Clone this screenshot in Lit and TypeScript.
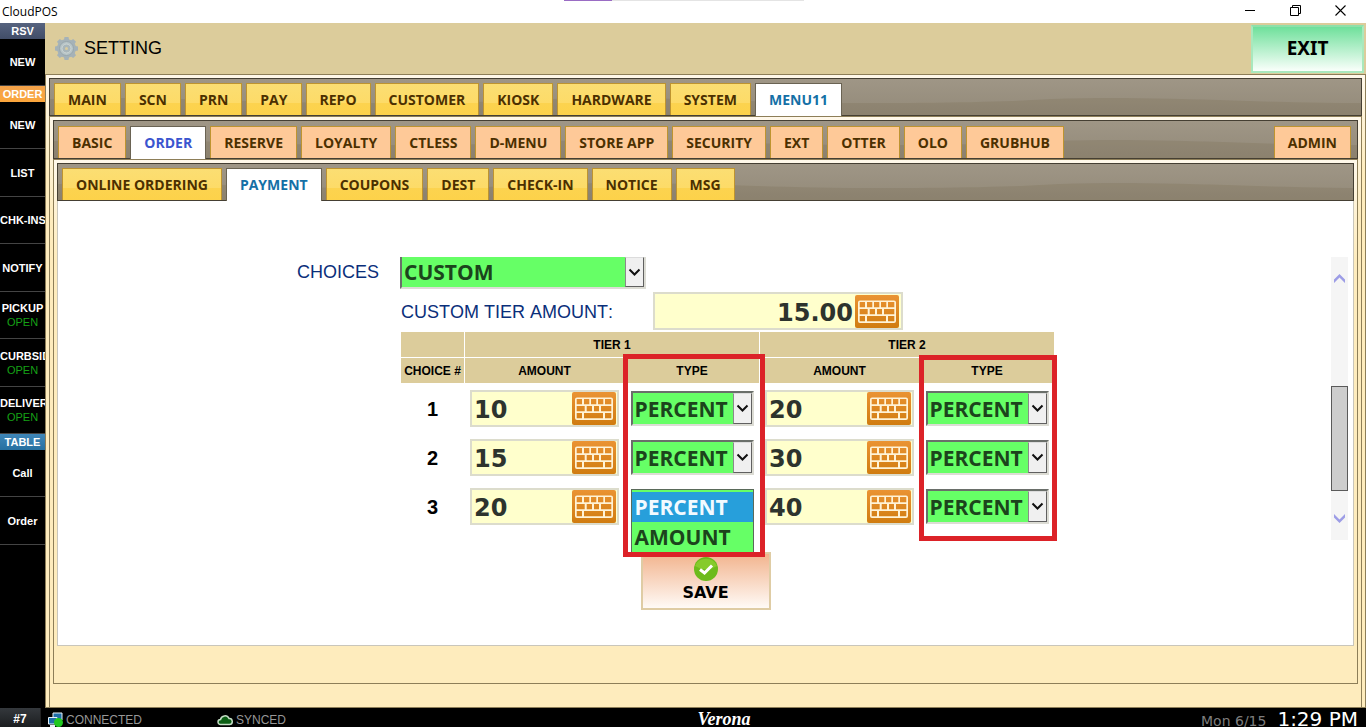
import { LitElement, html, css, svg, nothing } from "lit";
import { customElement, property } from "lit/decorators.js";
import { classMap } from "lit/directives/class-map.js";

const MAIN_TABS = ["MAIN", "SCN", "PRN", "PAY", "REPO", "CUSTOMER", "KIOSK", "HARDWARE", "SYSTEM", "MENU11"];
const MENU_TABS = [
  "BASIC", "ORDER", "RESERVE", "LOYALTY", "CTLESS", "D-MENU", "STORE APP",
  "SECURITY", "EXT", "OTTER", "OLO", "GRUBHUB",
];
const ORDER_TABS = ["ONLINE ORDERING", "PAYMENT", "COUPONS", "DEST", "CHECK-IN", "NOTICE", "MSG"];

interface NavItem { label: string; open?: boolean; }
interface NavGroup { title: string; tone: string; items: NavItem[]; }

const NAV: NavGroup[] = [
  { title: "RSV", tone: "slate", items: [{ label: "NEW" }] },
  {
    title: "ORDER", tone: "amber", items: [
      { label: "NEW" }, { label: "LIST" }, { label: "CHK-INS" }, { label: "NOTIFY" },
      { label: "PICKUP", open: true }, { label: "CURBSIDE", open: true }, { label: "DELIVERY", open: true },
    ],
  },
  { title: "TABLE", tone: "blue", items: [{ label: "Call" }, { label: "Order" }] },
];

const ROWS = [
  { n: 1, tier1: "10", tier2: "20" },
  { n: 2, tier1: "15", tier2: "30" },
  { n: 3, tier1: "20", tier2: "40" },
];

const chevron = svg`<path d="M1.5 1.5 L6.5 6.5 L11.5 1.5" fill="none" stroke="#111" stroke-width="2"/>`;

@customElement("amount-field")
class AmountField extends LitElement {
  @property() value = "";
  @property() label = "";
  @property({ type: Boolean, reflect: true }) wide = false;

  static styles = css`
    :host { display: block; width: 149px; }
    :host([wide]) { width: 250px; }
    .field {
      display: flex; align-items: center; box-sizing: border-box;
      height: 37px; padding-right: 1px;
      border: 2px solid #dcdccc; background: #ffffcc;
    }
    :host([wide]) .field { height: 38px; padding-right: 2px; }
    .text {
      flex: 1; min-width: 0; box-sizing: border-box; height: 33px; padding: 3px 2px 0; margin: 0;
      border: 0; outline: 0; background: none; color: #2d332d;
      font: bold 24px "DejaVu Sans", sans-serif;
    }
    :host([wide]) .text { text-align: right; }
    .keys { flex: none; display: block; padding: 0; border: 0; background: none; cursor: pointer; line-height: 0; }
  `;

  render() {
    return html`
      <div class="field">
        <input class="text" type="text" aria-label=${this.label} .value=${this.value}>
        <button class="keys" type="button" aria-label="Open keyboard">
          <svg width="44" height="33" viewBox="0 0 44 33">
            <defs>
              <linearGradient id="g" x1="0" y1="0" x2="0" y2="1">
                <stop offset="0" stop-color="#ea9333"/><stop offset="1" stop-color="#d07c10"/>
              </linearGradient>
            </defs>
            <rect width="44" height="33" rx="2" fill="url(#g)"/>
            <path fill="#fff3d6" fill-rule="evenodd" d="M5 5.500H39a2 2 0 0 1 2 2V26a2 2 0 0 1-2 2H5a2 2 0 0 1-2-2V7.500a2 2 0 0 1 2-2Z
              M4.700 7H10V12.300H4.700Z M12 7H17.300V12.300H12Z M19 7H24.300V12.300H19Z M26 7H31.300V12.300H26Z M33 7H39.300V12.300H33Z
              M4.700 14H12.700V19.300H4.700Z M14.700 14H20V19.300H14.700Z M22 14H27V19.300H22Z M29 14H39.300V19.300H29Z
              M4.700 21H10V26.200H4.700Z M12 21H31V26.200H12Z M33 21H39.300V26.200H33Z"/>
          </svg>
        </button>
      </div>`;
  }
}

@customElement("pick-list")
class PickList extends LitElement {
  @property() value = "PERCENT";
  @property() label = "";
  @property({ type: Array }) options = ["PERCENT", "AMOUNT"];
  @property({ type: Boolean, reflect: true }) wide = false;
  @property({ type: Boolean }) open = false;

  static styles = css`
    :host { display: block; width: 123px; }
    :host([wide]) { width: 246px; }
    .box { position: relative; height: 35px; }
    :host([wide]) .box { height: 32px; }
    .select {
      display: block; appearance: none; box-sizing: border-box; width: 100%; height: 100%;
      margin: 0; padding: 2px 20px 0 2px; outline: 0; border-radius: 0;
      border: 2px solid; border-color: #6a6f6a #dcdcd4 #dcdcd4 #6a6f6a;
      background: #66ff66; color: #1c441c;
      font: bold 21px "Open Sans", sans-serif;
    }
    :host([wide]) .select { border-top: 0; padding-top: 0; }
    .arrow {
      position: absolute; top: 2px; right: 2px; bottom: 2px; width: 19px; box-sizing: border-box;
      display: flex; align-items: center; justify-content: center; pointer-events: none;
      border: 1px solid; border-color: #dcdcdc #606060 #606060 #8a8a8a; background: #f0f0f0;
    }
    :host([wide]) .arrow { top: 0; }
    .menu {
      position: absolute; top: 0; left: 0; width: 100%; box-sizing: border-box; margin: 0;
      padding: 2px 0 0; list-style: none; border: 1px solid #5a6a5a; background: #66ff66;
      font: bold 21px/30px "Open Sans", sans-serif; color: #1c441c;
    }
    .option { padding-left: 3px; }
    .current { background: #279fdb; color: #f2faff; }
  `;

  render() {
    return html`
      <div class="box">
        <select class="select" aria-label=${this.label}>
          ${this.options.map((o) => html`<option ?selected=${o === this.value}>${o}</option>`)}
        </select>
        <span class="arrow"><svg width="13" height="9" viewBox="0 0 13 9">${chevron}</svg></span>
        ${this.open ? html`
          <ul class="menu" role="listbox">
            ${this.options.map((o) => html`
              <li role="option" class=${classMap({ option: true, current: o === this.value })}>${o}</li>`)}
          </ul>` : nothing}
      </div>`;
  }
}

@customElement("tab-strip")
class TabStrip extends LitElement {
  @property({ type: Array }) tabs: string[] = [];
  @property() active = "";
  @property() end = "";
  @property({ reflect: true }) tone = "gold";

  static styles = css`
    :host { display: block; }
    .strip {
      display: flex; align-items: flex-end; gap: 4px; box-sizing: border-box; height: 38px;
      padding: 0 6px 0 4px; border: 1px solid #453f33;
      background-color: #988f7e;
      background-image:
        url("data:image/svg+xml,%3Csvg xmlns='http://www.w3.org/2000/svg' width='500' height='38'%3E%3Cpath d='M0 20C20 19 40 19 60 19C150 19 220 24 310 24S450 23 500 20V38H0Z' fill='%23706449' fill-opacity='.22'/%3E%3C/svg%3E"),
        linear-gradient(#9f9686, #938a79);
    }
    :host([tone="peach"]) .strip { height: 39px; }
    .tab {
      flex: none; box-sizing: border-box; height: 32px; padding: 0 13px; margin: 0;
      border: 1px solid #be9430; border-bottom: 0; cursor: pointer;
      background: linear-gradient(#fbde73 0, #fddb68 60%, #fcd34f 62%, #fdd24a 100%);
      color: #4c3000; font: bold 14px/32px "Open Sans", sans-serif; white-space: nowrap;
    }
    :host([tone="peach"]) .tab { background: #fec998; line-height: 30px; }
    .tab.active, :host([tone="peach"]) .tab.active {
      height: 34px; margin-bottom: -2px; padding-bottom: 2px; border-color: #6a6353;
      background: #fff; color: #1570a6;
    }
    :host([tone="peach"]) .tab.active { color: #3b55cf; }
    .end { margin-left: auto; }
  `;

  render() {
    return html`
      <div class="strip" role="tablist">
        ${this.tabs.map((t) => html`
          <button type="button" role="tab" aria-selected=${t === this.active}
            class=${classMap({ tab: true, active: t === this.active })}>${t}</button>`)}
        ${this.end ? html`<button type="button" role="tab" class="tab end">${this.end}</button>` : nothing}
      </div>`;
  }
}

@customElement("app-root")
class AppRoot extends LitElement {
  static styles = css`
    :host { display: block; background: #fff; color: #000; font-family: "Liberation Sans", Arial, sans-serif; }
    .window { display: flex; flex-direction: column; min-height: 100vh; }

    .titlebar {
      display: flex; align-items: center; box-sizing: border-box; height: 23px; padding: 0 22px 0 2px;
      background: linear-gradient(90deg, #9a6cc4 48px, #e4e4e4 48px) top center / 240px 1px no-repeat #fff;
      font: 12px "Open Sans", sans-serif;
    }
    .title { flex: 1; }
    .controls { display: flex; gap: 34px; padding-bottom: 2px; }
    .control { display: block; padding: 0; border: 0; background: none; line-height: 0; }

    .shell { flex: 1; display: grid; grid-template-columns: 45px minmax(0, 1fr); margin-right: 2px; background: #000; }

    .nav-title { height: 16px; box-sizing: border-box; font: bold 11px/16px "Liberation Sans", sans-serif; color: #fff; text-align: center; }
    .slate { background: linear-gradient(#56637f, #414d68); }
    .amber { background: linear-gradient(#f3a24a, #fba63c); }
    .blue { background: linear-gradient(#3f86b8, #2670a0); }
    .nav-items { display: flex; flex-direction: column; }
    .nav-item {
      display: flex; flex-direction: column; justify-content: center; height: 47px;
      padding: 0; border: 0; border-bottom: 1px solid #444; box-sizing: border-box; overflow: hidden;
      background: #000; color: #fff; font: bold 11px/14px "Liberation Sans", sans-serif; text-align: center;
      white-space: nowrap; cursor: pointer;
    }
    .nav-item:nth-child(even) { height: 48px; }
    .status { font-weight: normal; color: #16a016; }
    .nav-label, .status { display: block; width: 100%; }

    .main { display: flex; flex-direction: column; }
    .header {
      display: flex; align-items: center; box-sizing: border-box; height: 51px; padding: 0 2px 0 9px;
      background: #dccc9b; font-size: 18px;
    }
    .heading { flex: 1; margin: 0; padding-left: 5px; font-size: 18px; font-weight: normal; font-kerning: none; }
    .exit {
      box-sizing: border-box; width: 113px; height: 48px; padding: 0 0 2px; border: 2px solid #a9e8bd; border-top-color: #8fe0aa;
      background: linear-gradient(#6fe09b, #fafffb); font: bold 19px "Noto Sans", sans-serif; color: #000;
    }

    .panel {
      flex: 1; display: flex; flex-direction: column; padding: 3px;
      border: 1px solid #8d7e58; background: linear-gradient(#fff8ea, #feecbd 100px);
    }
    .group { flex: 1; display: flex; flex-direction: column; }
    .outer { padding-bottom: 0; }
    .level1 { padding-bottom: 23px; border-bottom: 0; }
    .level2 { padding-bottom: 37px; }
    .content { flex: 1; padding: 56px 0 34px; border: 1px solid #c9c6bb; border-top: 0; background: #fff; }

    .scroller { display: flex; min-height: 283px; padding-right: 5px; }
    .form { flex: 1; display: grid; grid-template-columns: 321px 1fr; column-gap: 21px; align-content: start; }
    .label { color: #0a2f7a; font-size: 18px; line-height: 31px; text-align: right; }
    .fields { display: flex; flex-direction: column; align-items: flex-start; }
    .custom { display: grid; grid-template-columns: 253px auto; align-items: center; padding: 3px 0 1px; }
    .custom-label { color: #0a2f7a; font-size: 18px; font-kerning: none; padding: 2px 0 0 1px; }

    .tiers { position: relative; }
    .table { border-collapse: separate; border-spacing: 1px; table-layout: fixed; width: 655px; }
    .head { height: 25px; padding: 0; background: #dccc9b; font-size: 12px; font-weight: bold; text-align: center; box-sizing: border-box; }
    .num { box-sizing: border-box; height: 48px; padding: 2px 0 0; font-size: 20px; font-weight: bold; text-align: center; }
    .cell { padding: 0; }
    .cell > * { margin: 0 auto; }
    .w-num { width: 63px; }
    .w-amount { width: 159px; }
    .w-type { width: 134px; }

    .mark { position: absolute; box-sizing: border-box; border: 5px solid #dc2228; pointer-events: none; }
    .mark1 { left: 223px; top: 23px; width: 142px; height: 203px; z-index: 1; }
    .mark2 { left: 519px; top: 24px; width: 138px; height: 186px; }

    .scrollbar {
      display: flex; flex-direction: column; align-items: center; box-sizing: border-box;
      width: 17px; padding: 16px 0; background: #f5f5f5;
    }
    .track { flex: 1; align-self: stretch; padding: 103px 0 23px; display: flex; }
    .thumb { flex: 1; border: 1px solid #5a5a5a; background: #cdcdcd; }

    .save {
      display: flex; flex-direction: column; align-items: center; box-sizing: border-box;
      width: 130px; height: 58px; margin: 12px auto 0; padding: 3px 0 0; border: 2px solid #dfcca4;
      background: linear-gradient(#f2b48e, #fffaf6); font: bold 16px/24px "DejaVu Sans", sans-serif; color: #000;
    }

    .statusbar {
      display: grid; grid-template-columns: 8fr auto 7fr; grid-template-rows: 19px; height: 19px; overflow: hidden;
      margin-right: 2px; padding-right: 8px; background: #000; color: #979797; font-size: 12px;
    }
    .left { display: flex; align-items: center; height: 23px; }
    .station {
      width: 41px; line-height: 23px; margin-right: 7px; border-right: 1px solid #222; box-sizing: border-box;
      background: linear-gradient(#34383c, #16181a); color: #fff; font-weight: bold; text-align: center;
    }
    .net { width: 151px; padding-left: 3px; }
    .sync { padding-left: 3px; }
    .brand { color: #fff; font: italic bold 18px/22px "Liberation Serif", serif; padding-left: 3px; }
    .right {
      display: flex; justify-content: flex-end; align-items: baseline; gap: 11px; height: 23px;
      font-family: "DejaVu Sans", sans-serif; line-height: 23px;
    }
    .date { font-size: 14px; color: #7d7d7d; }
    .clock { font-size: 20px; color: #fff; }
  `;

  private nav() {
    return html`
      <nav class="nav">
        ${NAV.map((g) => html`
          <div class="nav-title ${g.tone}">${g.title}</div>
          <div class="nav-items">
            ${g.items.map((i) => html`
              <button type="button" class="nav-item">
                <span class="nav-label">${i.label}</span>
                ${i.open ? html`<span class="status">OPEN</span>` : nothing}
              </button>`)}
          </div>`)}
      </nav>`;
  }

  private table() {
    return html`
      <div class="tiers">
        <table class="table">
          <colgroup>
            <col class="w-num"><col class="w-amount"><col class="w-type"><col class="w-amount"><col class="w-type">
          </colgroup>
          <thead>
            <tr><th class="head"></th><th class="head" colspan="2">TIER 1</th><th class="head" colspan="2">TIER 2</th></tr>
            <tr>
              <th class="head">CHOICE #</th><th class="head">AMOUNT</th><th class="head">TYPE</th>
              <th class="head">AMOUNT</th><th class="head">TYPE</th>
            </tr>
          </thead>
          <tbody>
            ${ROWS.map((r) => html`
              <tr>
                <th class="num" scope="row">${r.n}</th>
                <td class="cell"><amount-field label="Tier 1 amount ${r.n}" value=${r.tier1}></amount-field></td>
                <td class="cell"><pick-list label="Tier 1 type ${r.n}" ?open=${r.n === 3}></pick-list></td>
                <td class="cell"><amount-field label="Tier 2 amount ${r.n}" value=${r.tier2}></amount-field></td>
                <td class="cell"><pick-list label="Tier 2 type ${r.n}"></pick-list></td>
              </tr>`)}
          </tbody>
        </table>
        <div class="mark mark1"></div>
        <div class="mark mark2"></div>
      </div>`;
  }

  render() {
    return html`
      <div class="window">
        <div class="titlebar">
          <span class="title">CloudPOS</span>
          <div class="controls">
            <button class="control" aria-label="Minimize"><svg width="11" height="11"><path d="M0 5.500H10" stroke="#000"/></svg></button>
            <button class="control" aria-label="Restore"><svg width="11" height="11" fill="none" stroke="#000"><path d="M.5 2.500H8.500V10.500H.5ZM2.500 2.500V.5H10.500V8.500H8.500"/></svg></button>
            <button class="control" aria-label="Close"><svg width="11" height="11"><path d="M.5 .5L10.500 10.500M10.500 .5L.5 10.500" stroke="#000" stroke-width="1.100"/></svg></button>
          </div>
        </div>

        <div class="shell">
          ${this.nav()}
          <main class="main">
            <header class="header">
              <svg width="25" height="25" viewBox="0 0 25 25">
                <g fill="#a5b2b8">
                  ${[0, 45, 90, 135].map((a) => svg`<path d="M10.500 1H14.500L15.500 6V19L14.500 24H10.500L9.500 19V6Z" transform="rotate(${a} 12.5 12.5)"/>`)}
                  <circle cx="12.500" cy="12.500" r="9.500"/>
                </g>
                <circle cx="12.500" cy="12.500" r="7" fill="#b8c5c8" stroke="#98a6ac"/>
                <circle cx="12.500" cy="12.500" r="4.500" fill="#a9b6ba" stroke="#cdd6d5"/>
                <circle cx="12.500" cy="12.500" r="1.500" fill="#dccc9b"/>
              </svg>
              <h1 class="heading">SETTING</h1>
              <button class="exit" type="button">EXIT</button>
            </header>

            <div class="panel outer">
              <div class="group">
                <tab-strip .tabs=${MAIN_TABS} active="MENU11"></tab-strip>
                <div class="panel level1">
                  <div class="group">
                    <tab-strip .tabs=${MENU_TABS} active="ORDER" end="ADMIN" tone="peach"></tab-strip>
                    <div class="panel level2">
                      <div class="group">
                        <tab-strip .tabs=${ORDER_TABS} active="PAYMENT"></tab-strip>
                        <section class="content">
                          <div class="scroller">
                            <div class="form">
                              <span class="label">CHOICES</span>
                              <div class="fields">
                                <pick-list wide label="Choices" .options=${["CUSTOM"]} value="CUSTOM"></pick-list>
                                <div class="custom">
                                  <span class="custom-label">CUSTOM TIER AMOUNT:</span>
                                  <amount-field wide label="Custom tier amount" value="15.00"></amount-field>
                                </div>
                                ${this.table()}
                              </div>
                            </div>
                            <div class="scrollbar" aria-hidden="true">
                              <svg width="11" height="10"><path d="M0 6.500L5.500 1L11 6.500V10L5.500 4.500L0 10Z" fill="#9d9de6"/></svg>
                              <div class="track"><div class="thumb"></div></div>
                              <svg width="11" height="10"><path d="M0 3.500L5.500 9L11 3.500V0L5.500 5.500L0 0Z" fill="#9d9de6"/></svg>
                            </div>
                          </div>
                          <button class="save" type="button">
                            <svg width="24" height="24" viewBox="0 0 24 24">
                              <circle cx="12" cy="12" r="12" fill="#6cbb1c"/>
                              <path d="M1 9A12 12 0 0 1 23 9Q12 16 1 9Z" fill="#86cb2c"/>
                              <path d="M6 12.500L10.500 16L18 8.500" fill="none" stroke="#fff" stroke-width="3"/>
                            </svg>
                            SAVE
                          </button>
                        </section>
                      </div>
                    </div>
                  </div>
                </div>
              </div>
            </div>
          </main>
        </div>

        <footer class="statusbar">
          <div class="left">
            <span class="station">#7</span>
            <svg width="15" height="15" viewBox="0 0 15 15">
              <path d="M5 1H14V8H5Z" fill="#1f6ea8" stroke="#e8f2f8"/>
              <path d="M.5 5.500H9V12H.5Z" fill="#1f6ea8" stroke="#e8f2f8"/>
              <path d="M2 14H7" stroke="#e8f2f8" stroke-width="2"/>
              <circle cx="10.500" cy="10.500" r="4.500" fill="#1fc81f"/>
            </svg>
            <span class="net">CONNECTED</span>
            <svg width="16" height="12" viewBox="0 0 16 12">
              <path d="M3.500 10.500A2.500 2.500 0 0 1 3.500 5.500 4.500 4.500 0 0 1 12 4.500 3 3 0 0 1 12.500 10.500Z" fill="#0b5e14" stroke="#c4dcc4" stroke-width="1.500"/>
            </svg>
            <span class="sync">SYNCED</span>
          </div>
          <span class="brand">Verona</span>
          <div class="right"><span class="date">Mon 6/15</span><span class="clock">1:29 PM</span></div>
        </footer>
      </div>`;
  }
}
